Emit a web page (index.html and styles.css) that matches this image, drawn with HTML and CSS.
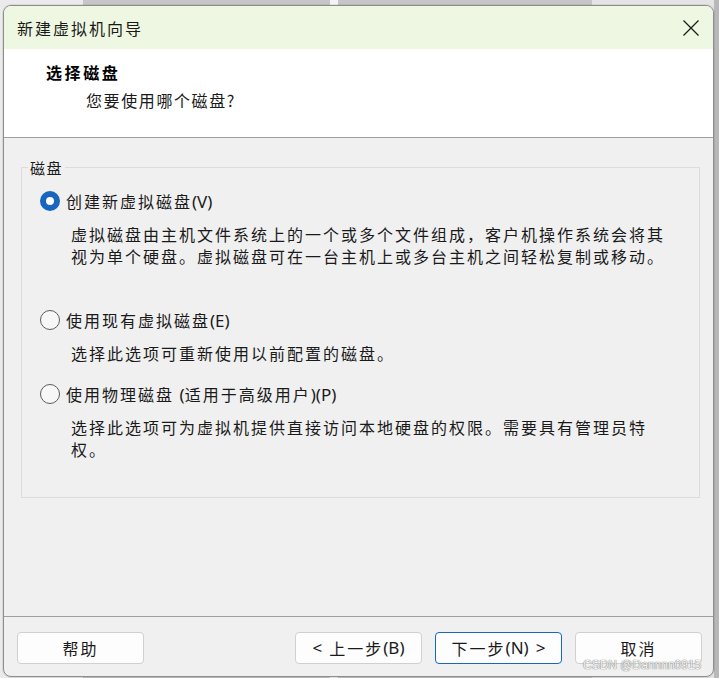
FILE: index.html
```html
<!DOCTYPE html>
<html lang="zh-CN">
<head>
<meta charset="utf-8">
<title>新建虚拟机向导</title>
<link rel="stylesheet" href="styles.css">
</head>
<body>
<div class="desktop">
  <div class="window">
    <div class="titlebar">
      <span class="title">新建虚拟机向导</span>
      <span class="close">
        <svg width="16" height="16" viewBox="0 0 16 16"><path d="M0.5 0.5 L15.5 15.5 M15.5 0.5 L0.5 15.5" stroke="#1c1c1c" stroke-width="1.3" fill="none"/></svg>
      </span>
    </div>
    <div class="header">
      <div class="h-title">选择磁盘</div>
      <div class="h-sub">您要使用哪个磁盘?</div>
    </div>
    <div class="body">
      <div class="group">
        <div class="legend">磁盘</div>
        <div class="opt opt1"><span class="radio checked"></span><span class="opt-text">创建新虚拟磁盘<span class="lat">(V)</span></span></div>
        <p class="desc desc1">虚拟磁盘由主机文件系统上的一个或多个文件组成，客户机操作系统会将其<br>视为单个硬盘。虚拟磁盘可在一台主机上或多台主机之间轻松复制或移动。</p>
        <div class="opt opt2"><span class="radio"></span><span class="opt-text">使用现有虚拟磁盘<span class="lat">(E)</span></span></div>
        <p class="desc desc2">选择此选项可重新使用以前配置的磁盘。</p>
        <div class="opt opt3"><span class="radio"></span><span class="opt-text">使用物理磁盘 <span class="lat">(</span>适用于高级用户<span class="lat">)(P)</span></span></div>
        <p class="desc desc3">选择此选项可为虚拟机提供直接访问本地硬盘的权限。需要具有管理员特<br>权。</p>
      </div>
    </div>
    <div class="footer">
      <div class="btn">帮助</div>
      <div class="spacer"></div>
      <div class="btn"><span class="lat lt">&lt;</span>上一步<span class="lat">(B)</span></div>
      <div class="btn primary">下一步<span class="lat">(N)</span><span class="lat gt">&gt;</span></div>
      <div class="btn">取消</div>
    </div>
  </div>
  <div class="watermark">CSDN @Dannnn0915</div>
</div>
</body>
</html>
```
FILE: styles.css
```css
* { box-sizing: border-box; }
html, body { margin: 0; padding: 0; }
body {
  width: 719px;
  height: 678px;
  overflow: hidden;
  font-family: "Noto Sans CJK SC", sans-serif;
  color: #1a1a1a;
  background:
    linear-gradient(to right, #ebebeb 0 83px, #c6c6c6 83px 330px, #f4f4f4 330px 338px, #c6c6c6 338px 592px, #e4e4e4 592px 714px, #b8b8b8 714px 719px);
}
.desktop {
  position: relative;
  width: 719px;
  height: 678px;
  padding: 5px 0 0 3px;
}
.window {
  width: 711px;
  height: 672px;
  border: 1px solid #8e8e8e;
  border-radius: 8px;
  overflow: hidden;
  background: #f0f0f0;
  display: flex;
  flex-direction: column;
  box-shadow: 0 0 0 1px rgba(0,0,0,0.08);
}
.titlebar {
  height: 43px;
  flex: none;
  background: #eef7e1;
  display: flex;
  align-items: center;
  padding: 0 14px 0 13px;
}
.title {
  flex: 1;
  font-size: 16px;
  letter-spacing: 2px;
  line-height: 20px;
  color: #1a1a1a;
}
.close {
  width: 16px;
  height: 16px;
  display: flex;
}
.header {
  height: 89px;
  flex: none;
  background: #ffffff;
  border-bottom: 1px solid #a0a0a0;
  padding: 12px 0 0 42px;
}
.h-title {
  font-size: 16px;
  font-weight: bold;
  letter-spacing: 2.6px;
  line-height: 22px;
  color: #000;
}
.h-sub {
  margin: 6px 0 0 40px;
  font-size: 16px;
  letter-spacing: 1.6px;
  line-height: 22px;
  color: #1a1a1a;
}
.body {
  flex: 1;
  padding: 29px 13px 0 17px;
}
.group {
  border: 1px solid #dcdcdc;
  height: 331px;
}
.legend {
  display: block;
  width: max-content;
  margin: -9px 0 0 6px;
  padding: 0 2px;
  background: #f0f0f0;
  font-size: 15px;
  line-height: 18px;
  letter-spacing: 1.5px;
}
.opt {
  display: flex;
  align-items: center;
  height: 24px;
  padding-left: 18px;
  font-size: 16px;
  letter-spacing: 2px;
  line-height: 24px;
}
.opt1 { margin-top: 12px; }
.opt2 { margin-top: 41px; }
.opt3 { margin-top: 18px; }
.radio {
  width: 20px;
  height: 20px;
  border-radius: 50%;
  border: 1px solid #5c5c5c;
  background: #f7f7f7;
  flex: none;
  margin-right: 6px;
}
.radio.checked {
  border: 6px solid #1767c0;
  background: #ffffff;
}
.lat {
  font-family: "Noto Sans", "Noto Sans CJK SC", sans-serif;
  font-size: 17px;
  letter-spacing: 0;
}
.lt { margin-right: 7px; }
.gt { margin-left: 7px; }
.desc {
  margin: 10px 0 0 0;
  padding-left: 49px;
  font-size: 16px;
  letter-spacing: 2px;
  line-height: 22px;
}
.footer {
  height: 60px;
  flex: none;
  border-top: 1px solid #a0a0a0;
  display: flex;
  align-items: flex-start;
  padding: 15px 11px 0 13px;
  gap: 13px;
}
.spacer { flex: 1; }
.btn {
  width: 127px;
  height: 32px;
  border: 1px solid #d0d0d0;
  border-radius: 4px;
  background: #fdfdfd;
  display: flex;
  align-items: center;
  justify-content: center;
  font-size: 16px;
  letter-spacing: 2px;
  line-height: 20px;
  color: #1a1a1a;
}
.btn.primary { border-color: #1767c0; }
.watermark {
  position: absolute;
  left: 583px;
  top: 658px;
  font-family: "Liberation Sans", sans-serif;
  font-size: 12px;
  line-height: 14px;
  color: #f4f4f4;
  text-shadow: 0 0 1px #7a7a7a, 0 0 1px #7a7a7a;
}
```
